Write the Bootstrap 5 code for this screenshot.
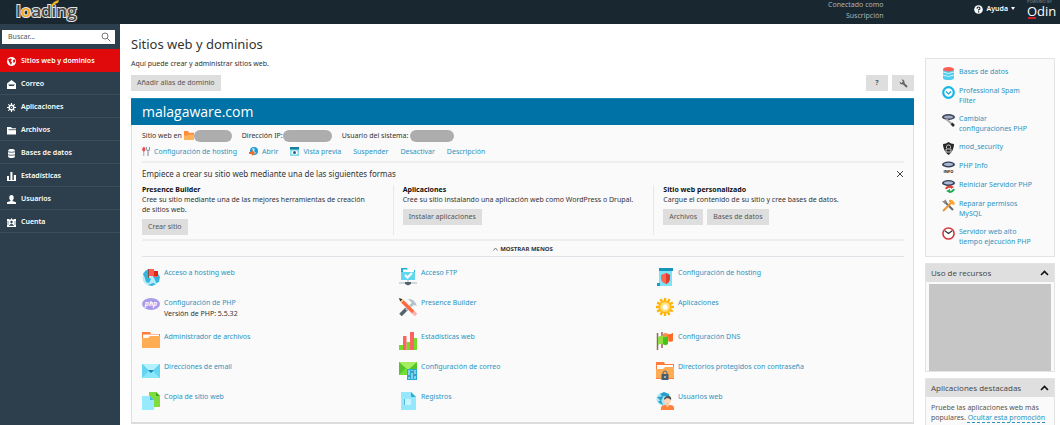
<!DOCTYPE html>
<html lang="es">
<head>
<meta charset="utf-8">
<meta name="viewport" content="width=device-width, initial-scale=1">
<title>Sitios web y dominios</title>
<link href="https://cdn.jsdelivr.net/npm/bootstrap@5.3.0/dist/css/bootstrap.min.css" rel="stylesheet">
<style>
body{font:400 7px/10px "Noto Sans","Open Sans",sans-serif;color:#333;background:#fff}
a{color:#2d93c0;text-decoration:none}
a:hover{text-decoration:underline}
svg{display:block;flex:none}
.topbar{height:24px;background:#182730;color:#a9b3b8;overflow:hidden}
.brand-logo{margin-left:14px}
.session{line-height:11px;text-align:right;margin:-1px 90px 0 0}
.help-btn{font-size:7px;line-height:10px;font-weight:600;color:#fff;background:none;border:0;padding:0}
.help-btn::after{margin-left:3px;border-top-width:3px;border-left-width:2px;border-right-width:2px;vertical-align:1px}
.help-area{margin-top:4px}
.side{width:120px;background:#2d3f4d;min-height:calc(100vh - 24px)}
.search-box{height:14px;margin:6px 5px 5px 2px;background:#fff}
.search-box input{font:inherit;border:0;outline:0;background:none;padding:0 0 0 6px;min-width:0;color:#444}
.search-box input::placeholder{color:#555;opacity:1}
.search-box button{border:0;background:none;padding:0 4px 0 0}
.side a{height:23px;padding:2px 0 0 7px;gap:5px;color:#fff;font-weight:600;border-bottom:1px solid #3c4d5a}
.side a.active{background:#e00a0d;border-color:#e00a0d}
.page-main{padding:11px 11px 0}
h1{font-size:13px;line-height:18px;font-weight:400;margin:0 0 6px;color:#333}
.intro{margin:0 0 6px}
.actions{margin-bottom:7px}
.btn-flat{font-size:7px;line-height:10px;padding:3px 6px;border:0;border-radius:0;background:#dedede;color:#555}
.btn-flat:hover{background:#d0d0d0}
.btn-sq{width:22px;height:16px;padding:0}
.domain{border:1px solid #e0e0e0;border-top:0;border-bottom:2px solid #dcdcdc;background:#fafafa}
.domain h2{font-family:"Open Sans",sans-serif;font-size:14px;line-height:24px;font-weight:400;color:#fff;background:#0072a5;margin:0 -1px;padding:1px 11px;border-top:1px solid #1689b8}
.domain-body{padding:4px 9px 0 10px}
.info-row{height:13px;gap:10px}
.link-row{margin:5px 0 4px;column-gap:12px}
.pill{width:38px;height:12px;border-radius:6px;background:#adadad}
.pill.wide{width:49px}
.pill.mid{width:44px}
.rule{border-top:2px solid #eee}
.lead-line{font-size:8px;line-height:12px;padding:5px 0}
.ways{display:grid;grid-template-columns:25fr 26fr 25fr;min-height:50px}
.ways>section{border-left:1px solid #e8e8e8;padding-left:9px}
.ways>section:first-child{border:0;padding-left:0}
.ways h3{font-size:7px;line-height:10px;font-weight:700;color:#111;margin:0}
.less-row{padding:3px 0 2px}
.less-btn{font-size:6px;line-height:10px;font-weight:700;color:#333;border:0;background:none;padding:0;gap:2px}
.tools{display:grid;grid-template-columns:repeat(3,1fr);row-gap:12px;margin-right:-9px;padding:11px 0 12px}
.tools>div{display:flex;gap:4px;min-height:18px}
.tools small{display:block;font-size:7px;line-height:12px;color:#333}
.rail{width:135px;padding:34px 5px 0 0;flex:none}
.rail-box{border:1px solid #e4e4e4;background:#fafafa;margin-bottom:6px}
.rail-box:last-child{margin-bottom:0}
.quick{display:flex;flex-direction:column;gap:8px;padding:8px 10px 9px 16px}
.quick a{display:flex;gap:4px;min-height:11px}
.quick svg{margin-bottom:-4px}
.rail-head{font-family:"Open Sans",sans-serif;font-size:8px;line-height:18px;padding:0 5px;background:#dfdfdf;color:#444;border:0;width:100%}
.usage{height:87px;margin:2px 3px 0;background:#c6c6c6}
.promo{padding:6px 5px 3px;color:#555}
.promo a{text-decoration:underline dashed 1px;text-underline-offset:2px}
</style>
</head>
<body>
<header class="topbar d-flex align-items-start">
  <svg class="brand-logo" width="66" height="24" viewBox="0 0 66 24" role="img" aria-label="loading">
    <text x="2" y="17" font-family="Open Sans" font-size="17" font-weight="600" fill="#444" stroke="#e4e4e4" stroke-width="2" paint-order="stroke">l<tspan fill="#f0a818">o</tspan>ading</text>
    <path d="M37 6Q39 1 45 0L44 3Q41 3 38 7z" fill="#f5b01c"/>
  </svg>
  <div class="session ms-auto">Conectado como<br>Suscripción</div>
  <div class="help-area d-flex align-items-center gap-1">
    <svg width="9" height="9" viewBox="0 0 9 9"><circle cx="4.500" cy="4.500" r="4.300" fill="#fff"/><path d="M3 3.600Q3.100 2 4.500 2T6 3.500Q6 4.300 4.600 4.900V5.600M4.600 6.300V7.400" stroke="#182730" stroke-width="1.200" fill="none"/></svg>
    <button class="help-btn dropdown-toggle" type="button">Ayuda</button>
  </div>
  <svg class="ms-2" width="37" height="24" viewBox="0 0 37 24"><text x="4" y="3" font-family="Open Sans" font-size="4" fill="#89949a">POWERED BY</text><text x="4" y="16" font-family="Open Sans" font-size="13" fill="#fff">Odin</text><path d="M5 18h8" stroke="#d4202c" stroke-width="2"/></svg>
</header>

<div class="d-flex">
  <nav class="side flex-shrink-0">
    <form class="search-box d-flex align-items-center">
      <input class="flex-grow-1" type="search" placeholder="Buscar..." aria-label="Buscar">
      <button type="button" aria-label="Buscar"><svg width="10" height="10" viewBox="0 0 10 10" fill="none" stroke="#777"><circle cx="4" cy="4" r="3"/><path d="M6.200 6.200L9.500 9.500"/></svg></button>
    </form>
    <a class="d-flex align-items-center active" href="#"><svg width="9" height="9" viewBox="0 0 9 9"><circle cx="4.500" cy="4.500" r="4.500" fill="#fff"/><path d="M1 2.500L3.500 1.500 5 2.500 3.500 4 5 5.500 4 8 2.500 5.500zM6 3l2-.5V5L6.500 6z" fill="#e00a0d"/></svg>Sitios web y dominios</a>
    <a class="d-flex align-items-center" href="#"><svg width="9" height="9" viewBox="0 0 9 9"><path d="M0 3.500L4.500 0 9 3.500V9H0z" fill="#fff"/><path d="M1 4.500h7L6.500 6h-4z" fill="#2d3f4d"/></svg>Correo</a>
    <a class="d-flex align-items-center" href="#"><svg width="9" height="9" viewBox="0 0 9 9" stroke="#fff" fill="none"><path d="M4.500 0v9M0 4.500h9M1.300 1.300l6.400 6.400M7.700 1.300L1.300 7.700" stroke-width="1.200"/><circle cx="4.500" cy="4.500" r="2.300" fill="#2d3f4d" stroke-width="1.400"/><circle cx="4.500" cy="4.500" r=".6" fill="#fff" stroke="none"/></svg>Aplicaciones</a>
    <a class="d-flex align-items-center" href="#"><svg width="9" height="9" viewBox="0 0 9 9"><path d="M0 1h4l1 1.200h4V8.500H0z" fill="#fff"/><path d="M1.500 3.700H9" stroke="#2d3f4d" stroke-width=".8"/></svg>Archivos</a>
    <a class="d-flex align-items-center" href="#"><svg width="9" height="9" viewBox="0 0 9 9"><rect x="1" width="7" height="9" rx="2.500" fill="#fff"/><path d="M1 2.800q3.500 1 7 0M1 5.800q3.500 1 7 0" stroke="#2d3f4d" stroke-width=".8" fill="none"/></svg>Bases de datos</a>
    <a class="d-flex align-items-center" href="#"><svg width="9" height="9" viewBox="0 0 9 9"><path d="M0 4h2v4H0zM3.400 0h2v8h-2zM6.800 3H9v5H6.800zM0 8h9v1H0z" fill="#fff"/></svg>Estadísticas</a>
    <a class="d-flex align-items-center" href="#"><svg width="9" height="9" viewBox="0 0 9 9" fill="#fff"><ellipse cx="4.500" cy="2.700" rx="2.200" ry="2.700"/><path d="M3.500 4h2v2L9 7.200V9H0V7.200L3.500 6z"/></svg>Usuarios</a>
    <a class="d-flex align-items-center" href="#"><svg width="9" height="9" viewBox="0 0 9 9"><path d="M0 1h2l1 1 1.500-2L6 2l1-1h2v8H0z" fill="#fff"/><circle cx="4.500" cy="4" r="1.200" fill="#2d3f4d"/><path d="M2.300 7.500Q4.500 4.500 6.700 7.500zM1 3v4M8 3v4" fill="#2d3f4d" stroke="#2d3f4d" stroke-width=".6"/></svg>Cuenta</a>
  </nav>

  <main class="page-main flex-grow-1">
    <h1>Sitios web y dominios</h1>
    <p class="intro">Aquí puede crear y administrar sitios web.</p>
    <div class="actions d-flex gap-1">
      <button class="btn btn-flat me-auto" type="button">Añadir alias de dominio</button>
      <button class="btn btn-flat btn-sq fw-bold" type="button" aria-label="Ayuda">?</button>
      <button class="btn btn-flat btn-sq d-flex align-items-center justify-content-center" type="button" aria-label="Ajustes"><svg width="9" height="9" viewBox="0 0 9 9"><path d="M3.500 3.500L8 8" stroke="#666" stroke-width="2"/><path d="M2.500.5Q5 0 5.500 2.500T3 5.500Q.5 5 .5 2.500L2.500 4 4 2.500z" fill="#666"/></svg></button>
    </div>
    <section class="domain">
      <h2>malagaware.com</h2>
      <div class="domain-body">
        <div class="info-row d-flex align-items-center">
          <span class="d-flex align-items-center">Sitio web en&nbsp;<svg width="10" height="9" viewBox="0 0 18 16"><path d="M0 0h7l2 3h9v13H0z" fill="#ff8b3d"/><path d="M0 8h7l2-2h9v10H0z" fill="#ffb25c"/></svg><i class="pill"></i></span>
          <span class="d-flex align-items-center">Dirección IP:<i class="pill wide"></i></span>
          <span class="d-flex align-items-center">Usuario del sistema:&nbsp;<i class="pill mid"></i></span>
        </div>
        <div class="link-row d-flex align-items-center">
          <a class="d-flex gap-1" href="#"><svg width="8" height="9" viewBox="0 0 9 10"><path d="M2 4v6" stroke="#999"/><ellipse cx="2" cy="2.500" rx="1.700" ry="2.500" fill="#ee4b4b"/><path d="M5 0v2q0 2 1.700 2T8.500 2V0M6.800 4v6" stroke="#8aa0a8" stroke-width="1.400" fill="none"/></svg>Configuración de hosting</a>
          <a class="d-flex gap-1" href="#"><svg width="9" height="9" viewBox="0 0 9 9"><circle cx="5" cy="4" r="4" fill="#1e9ed1"/><path d="M3 1l3 1-1 2 2 2-2 1z" fill="#c5eefa"/><path d="M0 5h3V3l3 3-3 3V7H0z" fill="#f26b2c"/></svg>Abrir</a>
          <a class="d-flex gap-1" href="#"><svg width="9" height="9" viewBox="0 0 9 9"><path d="M0 1h9v8H0z" fill="#8cdcee"/><path d="M0 0h9v2.500H0z" fill="#167e9f"/><ellipse cx="4.500" cy="5.500" rx="3" ry="2" fill="#fff"/><circle cx="4.500" cy="5.500" r="1.500" fill="#25637a"/></svg>Vista previa</a>
          <a href="#">Suspender</a><a href="#">Desactivar</a><a href="#">Descripción</a>
        </div>
        <div class="rule lead-line d-flex justify-content-between align-items-center">Empiece a crear su sitio web mediante una de las siguientes formas
          <button type="button" class="border-0 bg-transparent p-0" aria-label="Cerrar"><svg width="8" height="8" viewBox="0 0 8 8"><path d="M1 1l6 6M7 1L1 7" stroke="#444"/></svg></button></div>
        <div class="ways">
          <section><h3>Presence Builder</h3><p class="mb-1">Cree su sitio mediante una de las mejores herramientas de creación<br>de sitios web.</p><button class="btn btn-flat" type="button">Crear sitio</button></section>
          <section><h3>Aplicaciones</h3><p class="mb-1">Cree su sitio instalando una aplicación web como WordPress o Drupal.</p><button class="btn btn-flat" type="button">Instalar aplicaciones</button></section>
          <section><h3>Sitio web personalizado</h3><p class="mb-1">Cargue el contenido de su sitio y cree bases de datos.</p><div class="d-flex gap-1"><button class="btn btn-flat" type="button">Archivos</button><button class="btn btn-flat" type="button">Bases de datos</button></div></section>
        </div>
        <div class="rule less-row d-flex justify-content-center mt-1 border-bottom"><button class="less-btn d-flex align-items-center" type="button"><svg width="5" height="4" viewBox="0 0 5 4"><path d="M.5 3.500l2-2.500 2 2.500" stroke="#777" fill="none"/></svg>MOSTRAR MENOS</button></div>
        <div class="tools">
          <div><svg width="18" height="18" viewBox="0 0 18 18"><circle cx="9" cy="9.500" r="8.500" fill="#b4ecfa"/><path d="M1 6q2-4 6-5l1 4-2 4 3 2-2 4-3-1-1-4zM11 8l5-2 2 3-1 5-3 1-1-3zM6 17l5-2 3 1-4 2z" fill="#35b4dc"/><path d="M6.500 1v9" stroke="#8a5147"/><path d="M7 1h5v2h4v6h-5V8H7z" fill="#ff5c50"/><path d="M12 3h4v5h-4z" fill="#df2318"/></svg><a href="#">Acceso a hosting web</a></div>
          <div><svg width="18" height="18" viewBox="0 0 18 18"><path d="M2 0h6l1 2h7v10H2z" fill="#23afd5"/><path d="M4 1.500h11V4H4z" fill="#fff"/><path d="M2 4h14v8H2z" fill="#62d7f2"/><path d="M6 7l2.500 2.500L13 5" stroke="#fff" stroke-width="2" fill="none"/><path d="M9 12v3M0 15h18" stroke="#9fb4bd"/><path d="M6 14h6v2l-3 1.500L6 16z" fill="#53646e"/></svg><a href="#">Acceso FTP</a></div>
          <div><svg width="18" height="18" viewBox="0 0 18 18"><path d="M3 1h13v17H1v-2h2z" fill="#7ae3fa"/><path d="M3 0h14v3H3z" fill="#1794b8"/><path d="M1 15h3v3H1z" fill="#179ec3"/><path d="M10 5l4 2v4q-1 4-4 5-4-1-5-5V7z" fill="#ff674d"/><path d="M10 5l4 2v4q-1 4-4 5z" fill="#df3c31"/></svg><a href="#">Configuración de hosting</a></div>

          <div><svg width="18" height="18" viewBox="0 0 18 18"><ellipse cx="9" cy="6" rx="9" ry="6" fill="#a99be9"/><text x="9" y="8" text-anchor="middle" font-family="Open Sans" font-size="7" font-weight="700" font-style="italic" fill="#fff">php</text></svg><div><a href="#">Configuración de PHP</a><small>Versión de PHP: 5.5.32</small></div></div>
          <div><svg width="18" height="18" viewBox="0 0 18 18"><path d="M1.500 17l6-6" stroke="#52656e" stroke-width="3.500"/><path d="M7 12l7-7" stroke="#bbc8cd" stroke-width="2"/><path d="M9 1q6-1 9 7l-3-1-3 2-1-2 2-2z" fill="#b3c2c9"/><path d="M3 3l11.500 11.500" stroke="#ff6942" stroke-width="3.500"/><path d="M0 0l5 2-3 3z" fill="#ffd37b"/><path d="M0 0l3.500 1.200L1.200 3.500z" fill="#333"/><path d="M14 14l3 3" stroke="#ffafad" stroke-width="3.500"/></svg><a href="#">Presence Builder</a></div>
          <div><svg width="18" height="18" viewBox="0 0 18 18"><path d="M9 0v18M0 9h18M4.500 1.200l9 15.600M13.500 1.200l-9 15.600M1.200 4.500l15.600 9M16.800 4.500l-15.600 9" stroke="#ffb300" stroke-width="2.400"/><circle cx="9" cy="9" r="6.500" fill="#ffb914"/><circle cx="9" cy="9" r="4.800" fill="#ffe17d"/><circle cx="9" cy="9" r="2.500" fill="#fff"/></svg><a href="#">Aplicaciones</a></div>

          <div><svg width="18" height="18" viewBox="0 0 18 18"><path d="M0 0h8l1 2h9v14H0z" fill="#ff7b3b"/><path d="M1 2.500h16V8H1z" fill="#fff"/><path d="M0 6h6l2-2h10v12H0z" fill="#ffad55"/></svg><a href="#">Administrador de archivos</a></div>
          <div><svg width="18" height="18" viewBox="0 0 18 18"><path d="M0 13h4v5H0zM7.500 10H11v8H7.500zM15 6h3v12h-3z" fill="#74db2b"/><path d="M4 4h3.500v14H4zM11 0h4v18h-4z" fill="#ff6262"/></svg><a href="#">Estadísticas web</a></div>
          <div><svg width="18" height="18" viewBox="0 0 18 18"><path d="M6 0v16M1.500 1v17" stroke="#9a6654" stroke-width="1.500"/><path d="M7 2q3-2 5 0 2 1 5-1v8q-3 2-5 0H7z" fill="#ff8d45"/><path d="M12 2q2 1 5-1v8h-4z" fill="#ff6d2d"/><path d="M2 5q3-2 5-1 2 2 5 0v8q-3 2-5 0-2-1-5 1z" fill="#90dd40"/><path d="M7 5q2 1 5-1v8q-3 2-5 0z" fill="#43c51e"/></svg><a href="#">Configuración DNS</a></div>

          <div><svg width="18" height="18" viewBox="0 0 18 18"><path d="M0 2h18v14H0z" fill="#64d6f2"/><path d="M0 16l7-7h4l7 7z" fill="#8be8fc"/><path d="M0 2h18L9 11z" fill="#b3f1ff"/><path d="M0 2l9 9 9-9" stroke="#5cc6e0" stroke-width=".6" fill="none"/><path d="M6 8h6l-3 3z" fill="#168ab3"/></svg><a href="#">Direcciones de email</a></div>
          <div><svg width="18" height="18" viewBox="0 0 18 18"><path d="M0 0h18v13H0z" fill="#55c62a"/><path d="M0 0h18L9 8z" fill="#a6ee61"/><path d="M0 13l7-7 3 3v4z" fill="#77dd3b"/><path d="M8 7h10v11H8z" fill="#28acd6"/><path d="M10 8v9M13 8v9M16 8v9" stroke="#d8f6ff"/><path d="M9 14h2M12 10h2M15 13h2" stroke="#14607c"/></svg><a href="#">Configuración de correo</a></div>
          <div><svg width="18" height="18" viewBox="0 0 18 18"><path d="M0 0h8l1 2h9v15H0z" fill="#ff7c3d"/><path d="M1 3h16v5H1z" fill="#fff"/><path d="M0 7h7l2-2h9v11H0z" fill="#ffad55"/><path d="M7 12v-1q0-2 2-2t2 2v1" stroke="#53616b" fill="none"/><path d="M5.500 12h7v6h-7z" fill="#465f6d"/><path d="M8.500 14h1v2h-1z" fill="#fff"/></svg><a href="#">Directorios protegidos con contraseña</a></div>

          <div><svg width="18" height="18" viewBox="0 0 18 18"><path d="M7 0h7l4 4v11H7z" fill="#7edd3c"/><path d="M14 0l4 4h-4z" fill="#43aa1d"/><path d="M0 4h8l4 4v10H0z" fill="#97eaff"/><path d="M8 4l4 4H8z" fill="#40bddd"/></svg><a href="#">Copia de sitio web</a></div>
          <div><svg width="18" height="18" viewBox="0 0 18 18"><path d="M2 0h10l5 5v13H2z" fill="#95e7fb"/><path d="M12 0l5 5h-5z" fill="#30aecd"/><path d="M6 7h6v6H6z" fill="#c7f4ff"/><path d="M5.500 7v6" stroke="#52bad7"/></svg><a href="#">Registros</a></div>
          <div><svg width="18" height="18" viewBox="0 0 18 18"><circle cx="7" cy="7" r="6.500" fill="#a7e6f7"/><path d="M1 5l4 4 2-4-3-3 4-2 5 2 1 5-4-3M2 10l5 3-2-5" fill="#279fc8"/><path d="M5 18v-2q0-3 4-3h5q4 0 4 3v2z" fill="#ff823a"/><circle cx="11.500" cy="8.500" r="3.500" fill="#ffd6b5"/><path d="M10 11h3v3l-1.500 1-1.500-1z" fill="#ffc69d"/><path d="M8 8q0-4 4-4t3 4q-2-2-4-2z" fill="#4d555d"/></svg><a href="#">Usuarios web</a></div>
        </div>
      </div>
    </section>
  </main>

  <aside class="rail">
    <div class="rail-box quick">
      <a href="#"><svg width="13" height="13" viewBox="0 0 13 13"><path d="M1 2v9q0 2 5.500 2T12 11V2z" fill="#52cdef"/><path d="M1 5q5.500 3 11 0M1 8q5.500 3 11 0" stroke="#c8f4ff" fill="none"/><ellipse cx="6.500" cy="2.300" rx="5.500" ry="2.200" fill="#ff5d55"/></svg>Bases de datos</a>
      <a href="#"><svg width="13" height="13" viewBox="0 0 13 13"><circle cx="6.500" cy="6.500" r="5.300" fill="#fff" stroke="#16b7e8" stroke-width="2.200"/><path d="M4 5.500L6.500 8 9 5.500" stroke="#16a5d4" stroke-width="1.200" fill="none"/></svg><span>Professional Spam<br>Filter</span></a>
      <a href="#"><svg width="13" height="13" viewBox="0 0 13 13"><ellipse cx="6.500" cy="3" rx="6.500" ry="3" fill="#3c4658"/><ellipse cx="6.500" cy="3" rx="4.500" ry="1.600" fill="#a3acc5"/><path d="M4 5l6 5" stroke="#aaa" stroke-width="2"/><path d="M9.500 9.500l2.500 2.500" stroke="#292b31" stroke-width="2.500"/></svg><span>Cambiar<br>configuraciones PHP</span></a>
      <a href="#"><svg width="13" height="13" viewBox="0 0 13 13"><path d="M6.500 0Q9 2 12 2 12 9 6.500 13 1 9 1 2 4 2 6.500 0z" fill="#272727"/><path d="M4.500 6V4.500Q4.500 3 6.500 3T8.500 4.500V6M4 7h5v3H4z" stroke="#ccc" fill="none"/></svg>mod_security</a>
      <a href="#"><svg width="13" height="13" viewBox="0 0 13 13"><ellipse cx="6.500" cy="3.500" rx="6.500" ry="3" fill="#35435b"/><ellipse cx="6.500" cy="3.300" rx="4.500" ry="1.600" fill="#aab8d4"/><text x="6.500" y="12" text-anchor="middle" font-family="Open Sans" font-size="4" font-weight="700" fill="#111">INFO</text></svg>PHP Info</a>
      <a href="#"><svg width="13" height="13" viewBox="0 0 13 13"><ellipse cx="6.500" cy="3" rx="6.500" ry="3" fill="#35435b"/><ellipse cx="6.500" cy="2.800" rx="4.500" ry="1.600" fill="#aab8d4"/><path d="M4 9Q5 6 9 7" stroke="#e43e36" stroke-width="2" fill="none"/><path d="M8 5l4 2-3 2z" fill="#e43e36"/><path d="M12 9q-1 3-5 3" stroke="#22a95a" stroke-width="2" fill="none"/><path d="M8 9l-4 2 4 2z" fill="#22a95a"/></svg>Reiniciar Servidor PHP</a>
      <a href="#"><svg width="13" height="13" viewBox="0 0 13 13"><path d="M2 2l9 9" stroke="#666" stroke-width="2"/><path d="M1 12l8-8" stroke="#e79835" stroke-width="2"/><path d="M7 1q4-1 6 4l-2 1-4-3z" fill="#ffa42e"/><path d="M0 2l3 3 2-2-2-3v2z" fill="#888"/></svg><span>Reparar permisos<br>MySQL</span></a>
      <a href="#"><svg width="13" height="13" viewBox="0 0 14 14"><circle cx="7" cy="7" r="6" fill="#fff" stroke="#d6373d" stroke-width="1.700"/><path d="M3 4l4 3 4-3M7 7l-1-1" stroke="#333" stroke-width="1.200" fill="none"/></svg><span>Servidor web alto<br>tiempo ejecución PHP</span></a>
    </div>
    <div class="rail-box">
      <button type="button" class="rail-head d-flex justify-content-between align-items-center">Uso de recursos<svg width="9" height="6" viewBox="0 0 9 6"><path d="M1 5l3.500-3.500L8 5" stroke="#111" stroke-width="1.600" fill="none"/></svg></button>
      <div class="usage"></div>
    </div>
    <div class="rail-box">
      <button type="button" class="rail-head d-flex justify-content-between align-items-center">Aplicaciones destacadas<svg width="9" height="6" viewBox="0 0 9 6"><path d="M1 5l3.500-3.500L8 5" stroke="#111" stroke-width="1.600" fill="none"/></svg></button>
      <div class="promo">Pruebe las aplicaciones web más<br>populares. <a href="#">Ocultar esta promoción</a></div>
    </div>
  </aside>
</div>
<script src="https://cdn.jsdelivr.net/npm/bootstrap@5.3.0/dist/js/bootstrap.bundle.min.js"></script>
</body>
</html>
